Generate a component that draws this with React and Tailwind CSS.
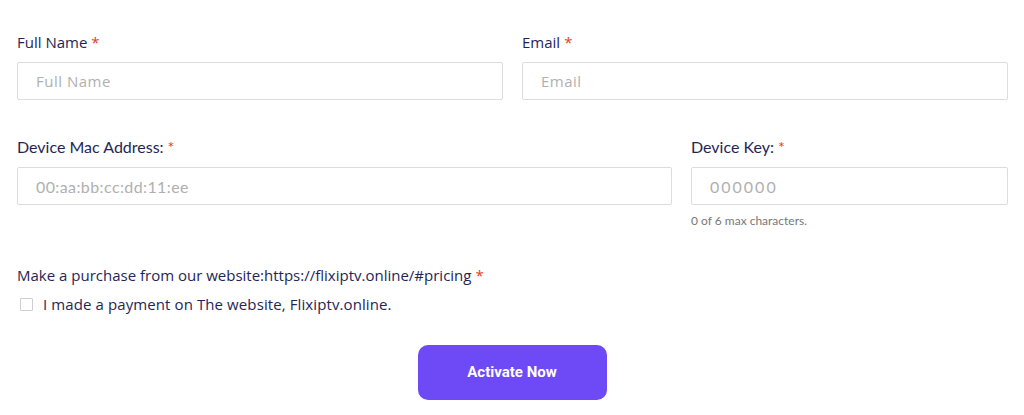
import React, { useState } from 'react';

const nunito = { fontFamily: '"Open Sans", "Noto Sans", sans-serif' };

function Req() {
  return <span className="text-[#e2401c] ml-1">*</span>;
}

function Field({ label, placeholder, lato }) {
  return (
    <div className="flex flex-col">
      <label
        className={`leading-[20px] text-[#1f2656] ${lato ? "font-['Lato',sans-serif] text-[16px]" : "font-['Open_Sans',sans-serif] text-[15px]"}`}
      >
        {label}
        <Req />
      </label>
      <input
        placeholder={placeholder}
        className={`h-[38px] w-full rounded-[2px] border border-[#dcdcdc] bg-white px-[18px] text-[#333] outline-none placeholder:text-[#b0b0b0] ${lato ? "mt-[10px] font-['Lato',sans-serif] text-[16px] tracking-[0.4px]" : "mt-[10px] font-['Open_Sans',sans-serif] text-[15px] tracking-[0.5px]"}`}
      />
    </div>
  );
}

export default function App() {
  const [checked, setChecked] = useState(false);
  const [key, setKey] = useState('');

  return (
    <div className="w-[1024px] h-[415px] bg-white pl-[17px] pr-[16px] pt-[32px]">
      <div className="grid grid-cols-2 gap-x-[19px]">
        <Field label="Full Name" placeholder="Full Name" />
        <Field label="Email" placeholder="Email" />
      </div>

      <div className="mt-[37px] grid grid-cols-[655px_1fr] gap-x-[19px]">
        <Field label="Device Mac Address:" placeholder="00:aa:bb:cc:dd:11:ee" lato />
        <div className="flex flex-col">
          <label className="font-['Lato',sans-serif] text-[16px] leading-[20px] text-[#1f2656]">
            Device Key:
            <Req />
          </label>
          <input
            placeholder="000000"
            maxLength={6}
            value={key}
            onChange={(e) => setKey(e.target.value)}
            className="mt-[10px] h-[38px] w-full rounded-[2px] border border-[#dcdcdc] bg-white px-[18px] font-['Lato',sans-serif] text-[16px] tracking-[2px] text-[#333] outline-none placeholder:text-[#b0b0b0]"
          />
          <p className="mt-[9px] font-['Lato',sans-serif] text-[12px] leading-[14px] text-[#777]">
            {key.length} of 6 max characters.
          </p>
        </div>
      </div>

      <div className="mt-[37px]" style={nunito}>
        <p className="text-[15px] leading-[20px] text-[#1f2656]">
          Make a purchase from our website:https://flixiptv.online/#pricing
          <Req />
        </p>
        <label className="mt-[9px] flex items-center gap-[10px] pl-[3px] text-[15px] leading-[20px] tracking-[0.1px] text-[#1f2656]">
          <input
            type="checkbox"
            checked={checked}
            onChange={() => setChecked(!checked)}
            className="h-[13px] w-[13px] appearance-none rounded-[1px] border border-[#cfcfcf] bg-white"
          />
          I made a payment on The website, Flixiptv.online.
        </label>
      </div>

      <div className="mt-[31px] flex justify-center pr-[1px]">
        <button className="h-[55px] w-[189px] rounded-[10px] bg-[#6e4af6] font-['Roboto',sans-serif] text-[15px] font-bold text-white">
          Activate Now
        </button>
      </div>
    </div>
  );
}
